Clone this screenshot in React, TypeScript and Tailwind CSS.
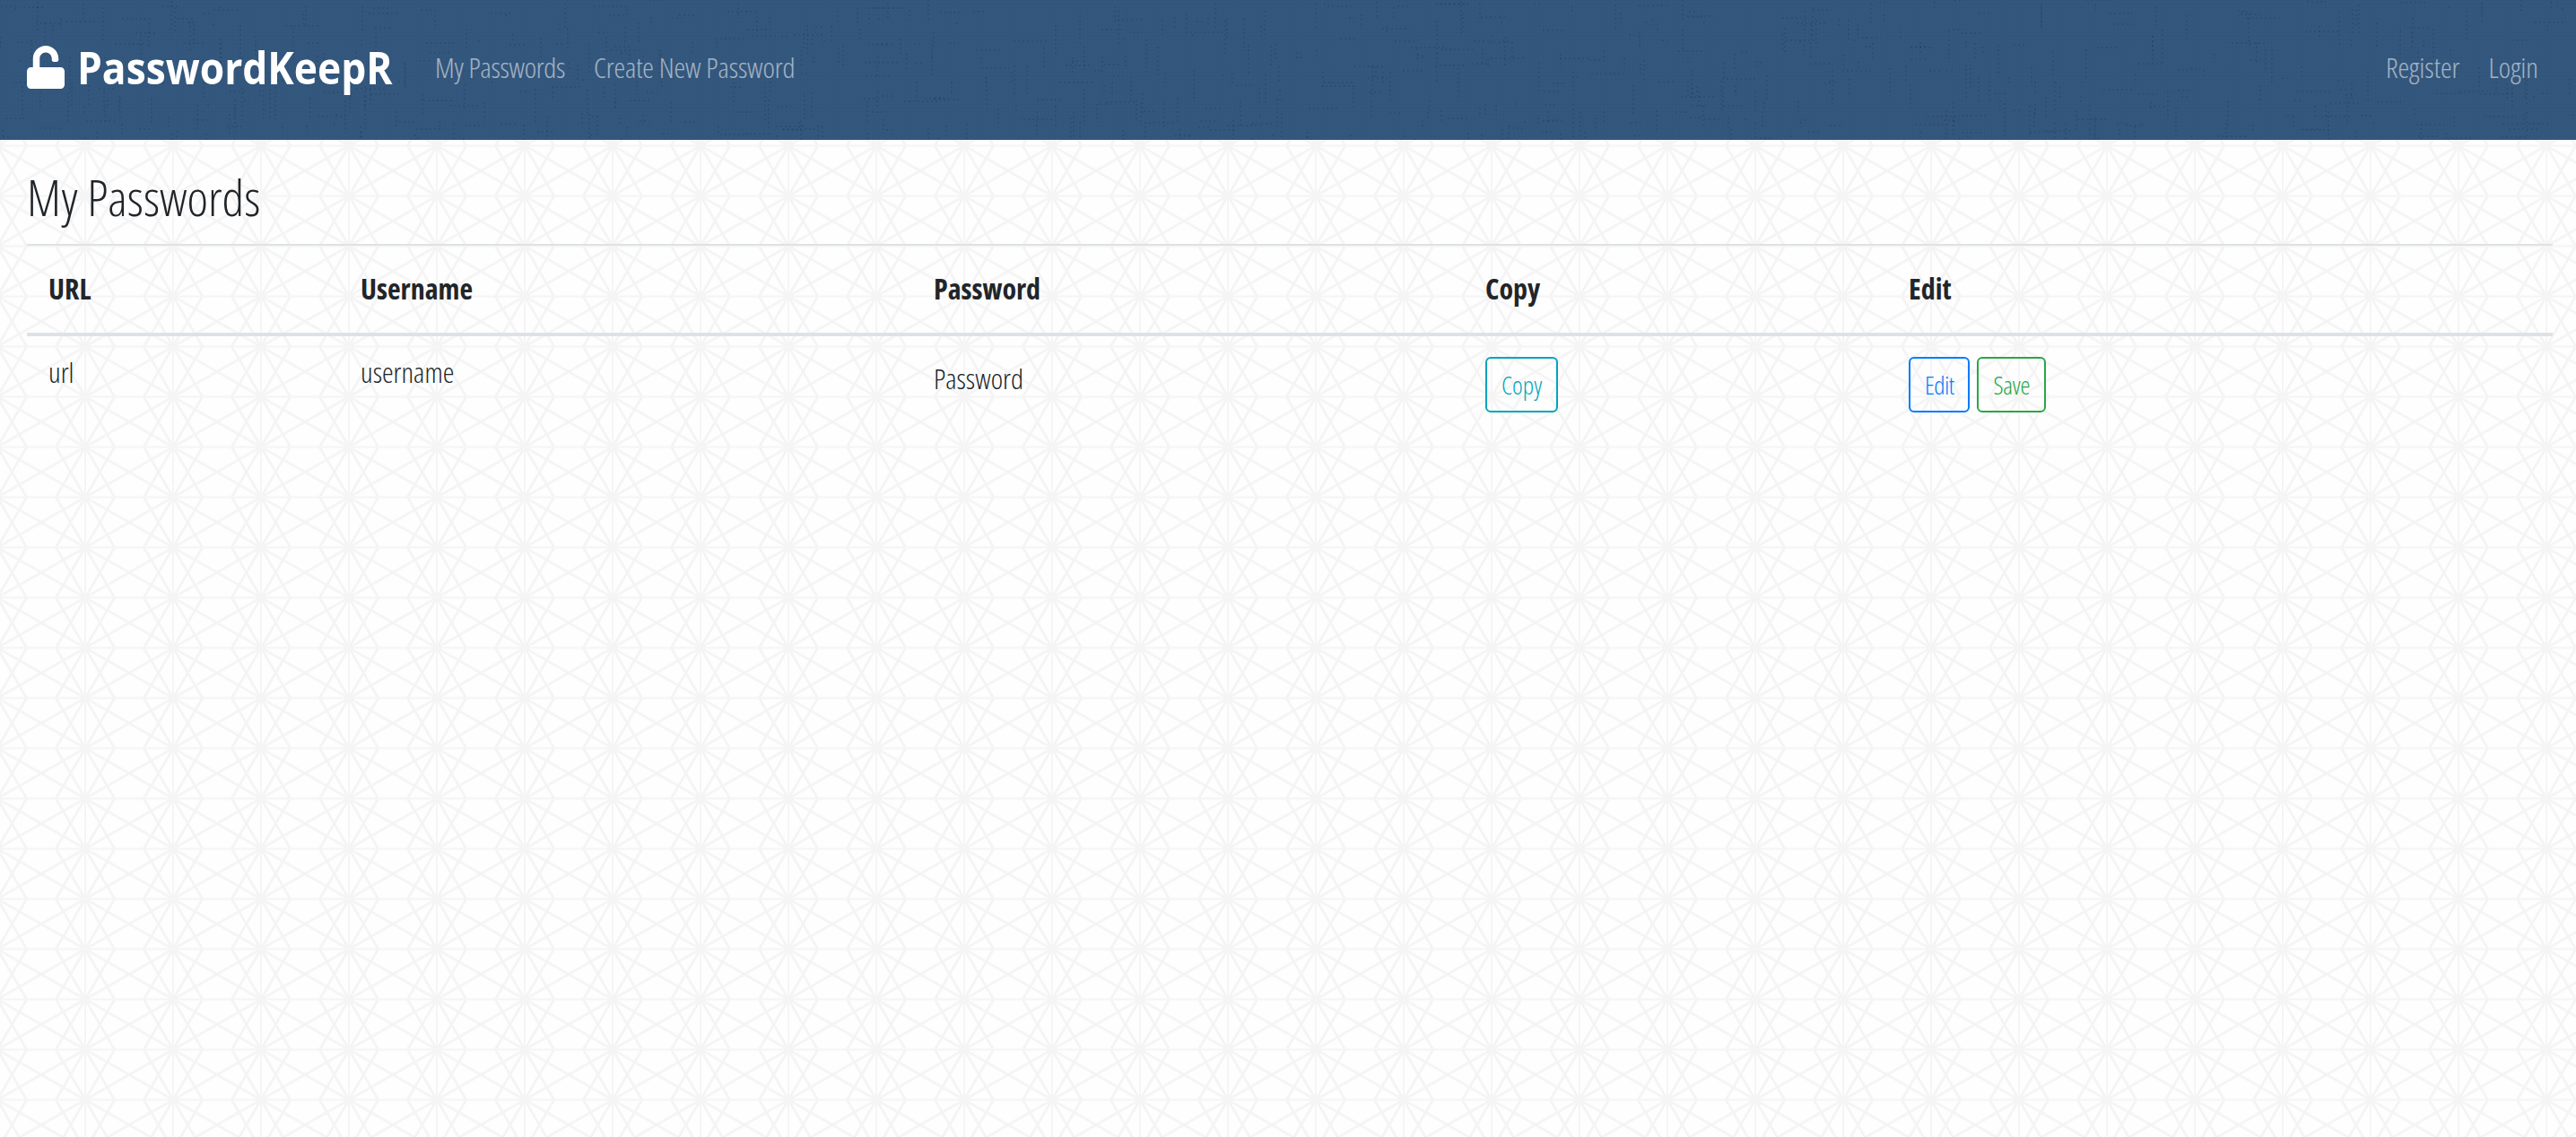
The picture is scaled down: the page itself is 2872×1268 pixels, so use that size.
import React from "react";
import { FaUnlock } from "react-icons/fa";

const W = 98;
const R = 56;

const DIAGONALS: [number, number, number, number][] = [
  [0, 0, W, R],
  [0, R, W, 0],
  [0, 0, W / 3, R],
  [0, R, W / 3, 0],
  [W, 0, (2 * W) / 3, R],
  [W, R, (2 * W) / 3, 0],
];

function rng(seed: number) {
  let s = seed;
  return () => {
    s = (s * 16807) % 2147483647;
    return s / 2147483647;
  };
}

function navScratches() {
  const r = rng(4242);
  const items: [number, number, number, number][] = [];
  for (let i = 0; i < 800; i++) {
    const x = Math.floor(r() * 2872);
    const y = Math.floor(r() * 156);
    const len = 4 + r() * 34;
    if (r() > 0.62) items.push([x, y, x + len, y]);
    else items.push([x, y, x, y + len]);
  }
  return items;
}

function App() {
  const sc = navScratches();
  return (
    <div className="relative min-h-[1268px] bg-[#fefefe] overflow-hidden [font-family:'Open_Sans',sans-serif] [font-stretch:75%] text-[#212529]">
      <svg className="absolute inset-0 w-full h-full blur-[0.6px]" aria-hidden="true">
        <defs>
          <pattern id="bgp" width={W} height={R} patternUnits="userSpaceOnUse" patternTransform="translate(-3 50.5)">
            {DIAGONALS.map((l, i) => (
              <line key={i} x1={l[0]} y1={l[1]} x2={l[2]} y2={l[3]} stroke="#f4f4f4" strokeWidth="2.8" />
            ))}
            <line x1="0" y1="0" x2={W} y2="0" stroke="#f5f5f5" strokeWidth="2.4" />
            <line x1="0" y1={R} x2={W} y2={R} stroke="#f5f5f5" strokeWidth="2.4" />
            <line x1="0" y1="0" x2="0" y2={R} stroke="#f5f5f5" strokeWidth="2" />
            <line x1={W} y1="0" x2={W} y2={R} stroke="#f5f5f5" strokeWidth="2" />
          </pattern>
        </defs>
        <rect width="100%" height="100%" fill="url(#bgp)" />
      </svg>
      <nav className="relative h-[156px] bg-[#33577d] flex items-center pl-[30px] pr-[42px] pb-[6px] overflow-hidden">
        <svg className="absolute inset-0 w-full h-full" aria-hidden="true">
          <defs>
            <pattern id="weave" width="4" height="4" patternUnits="userSpaceOnUse">
              <path d="M0 0H4M0 0V4" stroke="#10243a" strokeOpacity="0.05" strokeWidth="1" fill="none" />
            </pattern>
          </defs>
          <rect width="100%" height="100%" fill="url(#weave)" />
          {sc.map((l, i) => (
            <line key={i} x1={l[0]} y1={l[1]} x2={l[2]} y2={l[3]} stroke="#1c2f44" strokeOpacity="0.18" strokeWidth="2" strokeDasharray="2 3" />
          ))}
        </svg>
        <div className="relative flex items-center w-full">
          <FaUnlock className="text-white w-[42px] h-[48px] mr-[14px] shrink-0" />
          <span className="block w-[351px] mr-[48px] shrink-0 text-[50px] font-bold text-white leading-none whitespace-nowrap [font-stretch:100%] origin-left scale-x-[0.887]">PasswordKeepR</span>
          <a className="text-[32px] font-light text-white/55 mr-[32px] tracking-[-0.3px]">My Passwords</a>
          <a className="text-[32px] font-light text-white/55 tracking-[-0.1px]">Create New Password</a>
          <div className="ml-auto flex gap-[32px]">
            <a className="text-[32px] font-light text-white/55">Register</a>
            <a className="text-[32px] font-light text-white/55">Login</a>
          </div>
        </div>
      </nav>
      <main className="relative pl-[30px] pr-[26px]">
        <h1 className="text-[56px] font-light leading-[1.2] pt-[30px] pb-[19px] border-b-2 border-[#dee2e6]">My Passwords</h1>
        <table className="w-full table-fixed border-collapse">
          <thead>
            <tr className="border-b-4 border-[#dee2e6]">
              <th className="w-[348px] text-left text-[32px] font-bold px-[24px] pt-[24px] pb-[25px]">URL</th>
              <th className="w-[639px] text-left text-[32px] font-bold px-[24px] pt-[24px] pb-[25px]">Username</th>
              <th className="w-[615px] text-left text-[32px] font-bold px-[24px] pt-[24px] pb-[25px]">Password</th>
              <th className="w-[472px] text-left text-[32px] font-bold px-[24px] pt-[24px] pb-[25px]">Copy</th>
              <th className="text-left text-[32px] font-bold px-[24px] pt-[24px] pb-[25px]">Edit</th>
            </tr>
          </thead>
          <tbody>
            <tr className="text-[32px] font-light">
              <td className="px-[24px] pt-[16px] align-top">url</td>
              <td className="px-[24px] pt-[16px] align-top">username</td>
              <td className="px-[24px] pt-[23px] align-top">Password</td>
              <td className="px-[24px] pt-[23px] align-top">
                <button className="h-[62px] px-[16px] border-2 border-[#00a5bb] rounded-[6px] text-[#00a5bb] text-[28px] font-light">Copy</button>
              </td>
              <td className="px-[24px] pt-[23px] align-top">
                <div className="flex gap-[8px]">
                  <button className="h-[62px] px-[16px] border-2 border-[#007bff] rounded-[6px] text-[#007bff] text-[28px] font-light tracking-[-0.6px]">Edit</button>
                  <button className="h-[62px] px-[16px] border-2 border-[#28a745] rounded-[6px] text-[#28a745] text-[28px] font-light tracking-[-0.3px]">Save</button>
                </div>
              </td>
            </tr>
          </tbody>
        </table>
      </main>
    </div>
  );
}

export default App;
